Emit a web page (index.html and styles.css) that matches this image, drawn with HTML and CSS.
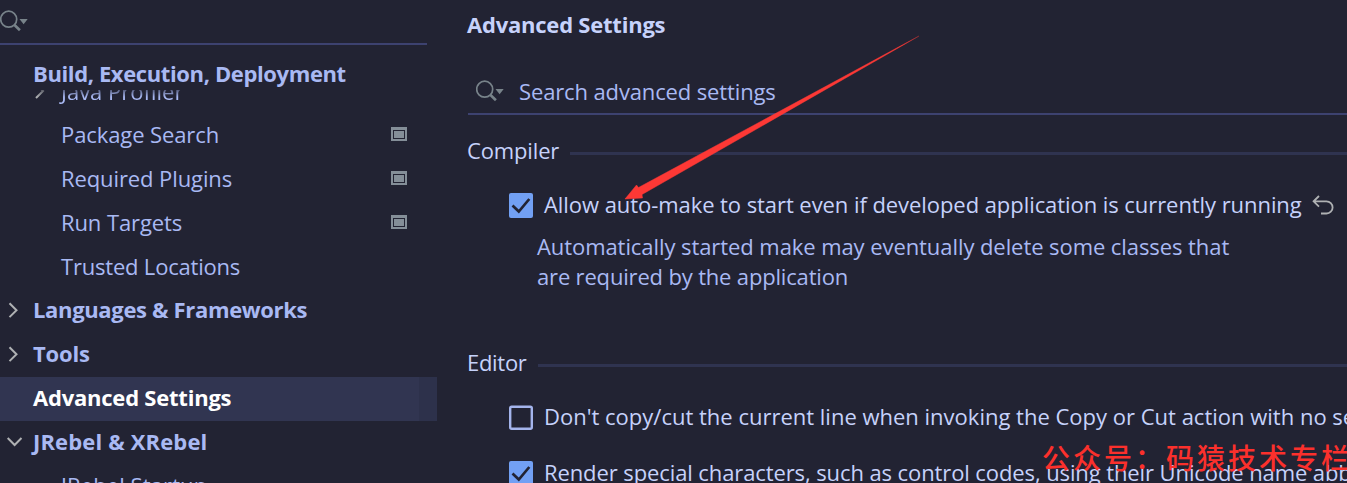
FILE: index.html
```html
<!DOCTYPE html>
<html lang="en">
<head>
<meta charset="utf-8">
<title>Settings</title>
<link rel="stylesheet" href="styles.css">
</head>
<body>
<div class="window">
  <aside class="sidebar">
    <div class="side-search">
      <svg class="search-icon" width="28" height="22" viewBox="0 0 28 22"><circle cx="8.7" cy="9.2" r="8" fill="none" stroke="#78838a" stroke-width="1.7"/><path d="M14.5 15l5.4 5.2" stroke="#78838a" stroke-width="2.6"/><path d="M19.5 9h8.2l-4.1 5.2z" fill="#78838a"/></svg>
    </div>
    <div class="tree-head"><span class="t-build">Build, Execution, Deployment</span></div>
    <div class="tree">
      <div class="row child faded"><svg class="arrow-sub" width="10" height="16" viewBox="0 0 10 16"><path d="M1 1l7 7-7 7" fill="none" stroke="#afb1b3" stroke-width="2"/></svg><span class="t-java">Java Profiler</span></div>
      <div class="row child"><span class="t-package">Package Search</span><i class="project-icon"></i></div>
      <div class="row child"><span class="t-plugins">Required Plugins</span><i class="project-icon"></i></div>
      <div class="row child"><span class="t-targets">Run Targets</span><i class="project-icon"></i></div>
      <div class="row child"><span class="t-trusted">Trusted Locations</span></div>
      <div class="row top"><svg class="arrow" width="17" height="16" viewBox="0 0 17 16"><path d="M1.5 1.3l7 6.9-7 6.9" fill="none" stroke="#afb1b3" stroke-width="2"/></svg><span class="t-lang">Languages &amp; Frameworks</span></div>
      <div class="row top"><svg class="arrow" width="17" height="16" viewBox="0 0 17 16"><path d="M1.5 1.3l7 6.9-7 6.9" fill="none" stroke="#afb1b3" stroke-width="2"/></svg><span class="t-tools">Tools</span></div>
      <div class="row top selected"><span class="t-adv">Advanced Settings</span></div>
      <div class="row top"><svg class="arrow" width="17" height="16" viewBox="0 0 17 16"><path d="M-.3 4l6.9 7 6.9-7" fill="none" stroke="#afb1b3" stroke-width="2" /></svg><span class="t-jrebel">JRebel &amp; XRebel</span></div>
      <div class="row child"><span class="t-startup">JRebel Startup</span></div>
    </div>
  </aside>
  <main class="main">
    <h1 class="title"><span class="t-title">Advanced Settings</span></h1>
    <div class="main-search">
      <svg class="search-icon" width="28" height="22" viewBox="0 0 28 22"><circle cx="8.7" cy="9.2" r="8" fill="none" stroke="#78838a" stroke-width="1.7"/><path d="M14.5 15l5.4 5.2" stroke="#78838a" stroke-width="2.6"/><path d="M19.5 9h8.2l-4.1 5.2z" fill="#78838a"/></svg>
      <span class="t-search">Search advanced settings</span>
    </div>
    <section class="group compiler">
      <h2 class="group-title"><span class="t-compiler">Compiler</span></h2>
      <div class="option first">
        <svg class="check" width="24" height="25" viewBox="0 0 24 25"><rect width="24" height="25" rx="2" fill="#72a0f4"/><path d="M3.5 12.5l6.300 6L20.3 6" fill="none" stroke="#222333" stroke-width="2.7"/></svg>
        <span class="t-allow">Allow auto-make to start even if developed application is currently running</span>
        <svg class="undo" width="22" height="20" viewBox="0 0 22 20"><path d="M7 1L1.6 6.3 7 11.6M2 6.3h12.5a6.1 6.1 0 0 1 0 12.2H9" fill="none" stroke="#afb1b3" stroke-width="1.8"/></svg>
      </div>
      <p class="hint"><span class="t-hint1">Automatically started make may eventually delete some classes that</span><br><span class="t-hint2">are required by the application</span></p>
    </section>
    <section class="group">
      <h2 class="group-title"><span class="t-editor">Editor</span></h2>
      <div class="option second">
        <svg class="check" width="24" height="25" viewBox="0 0 24 25"><rect x="1.2" y="1.7" width="21.6" height="22" rx="1.5" fill="none" stroke="#a4b4ec" stroke-width="2.4"/></svg>
        <span class="t-copy">Don't copy/cut the current line when invoking the Copy or Cut action with no selection</span>
      </div>
      <div class="option third">
        <svg class="check" width="24" height="25" viewBox="0 0 24 25"><rect width="24" height="25" rx="2" fill="#72a0f4"/><path d="M3.5 12.5l6.300 6L20.3 6" fill="none" stroke="#222333" stroke-width="2.7"/></svg>
        <span class="t-render">Render special characters, such as control codes, using their Unicode name abbreviations</span>
      </div>
    </section>
  </main>
  <svg class="pointer" width="300" height="168" viewBox="0 0 300 168"><defs><linearGradient id="fade" x1="1" y1="0" x2="0" y2="1"><stop offset="0" stop-color="#fd3835" stop-opacity=".5"/><stop offset=".06" stop-color="#fd3835"/></linearGradient></defs><path d="M299 4L18.500 155.500 16.500 153 5 167 22.500 166 22 162.500 134 98.500z" fill="url(#fade)" stroke="url(#fade)" stroke-width=".5"/></svg>
  <div class="watermark">公众号：码猿技术专栏</div>
</div>
</body>
</html>
```

FILE: styles.css
```css
* { box-sizing: border-box; }
body { margin: 0; background: #222333; }
.window {
  position: relative;
  display: flex;
  width: 1347px;
  height: 483px;
  overflow: hidden;
  background: #222333;
  color: #a9b9f3;
  font: 22px/44px "Open Sans", "Noto Sans", sans-serif;
  white-space: nowrap;
}
.sidebar { width: 437px; flex: none; }
.side-search {
  width: 427px;
  height: 45px;
  padding-top: 10px;
  border-bottom: 2px solid #3d4270;
}
.search-icon { display: block; flex: none; }
.tree-head { height: 45px; padding: 6px 0 0 33px; font-weight: 700; }
.tree { height: 393px; overflow: hidden; }
.row { display: flex; align-items: center; height: 44px; }
.row span { padding-bottom: 2px; }
.row:first-child { margin-top: -21px; }
.child { padding-left: 61px; }
.top { font-weight: 700; padding-left: 8px; }
.top span { padding-bottom: 4px; }
.arrow { width: 17px; margin: -2px 8px 0 0; overflow: visible; }
.arrow-sub { margin: 0 16px 0 -26px; }
.faded {
  -webkit-mask-image: linear-gradient(transparent 16px, #000 28px);
  mask-image: linear-gradient(transparent 16px, #000 28px);
}
.faded span { padding-bottom: 0; }
.selected {
  padding-left: 33px;
  color: #fff;
  background: linear-gradient(90deg, #313551 419px, #2d314b 419px);
}
.project-icon {
  width: 16px;
  height: 14px;
  margin: -2px 30px 0 auto;
  border: 2px solid #848e98;
  border-top-width: 3px;
  background: #848e98;
  background-clip: content-box;
  padding: 1px;
}
.main { flex: 1; min-width: 0; padding-left: 30px; }
.title { height: 50px; margin: 0; padding-top: 2px; font-size: 22px; font-weight: 700; line-height: 44px; color: #c6d2fb; }
.main-search {
  display: flex;
  align-items: center;
  height: 65px;
  margin-left: 1px;
  padding: 18px 0 0 8px;
  border-bottom: 2px solid #3d4270;
}
.main-search .search-icon { margin: 0 15px 0 0; }
.group { color: #c6d2fb; }
.compiler { height: 212px; }
.group-title { display: flex; align-items: center; height: 72px; margin: 0; font-size: 22px; font-weight: 400; }
.group-title span { padding-bottom: 2px; }
.group-title::after { content: ""; flex: 1; height: 3px; margin: 4px 0 0 11px; background: #2f3350; }
.option { display: flex; align-items: center; height: 44px; padding-left: 42px; }
.option span { padding-bottom: 2px; }
.first { margin-top: -4px; }
.second { margin-top: -4px; }
.third { margin-top: 12px; }
.check { flex: none; margin: 1px 11px 0 0; }
.undo { flex: none; margin-left: 10px; }
.hint { margin: 4px 0 0 70px; line-height: 30px; color: #a9b9f3; }
.t-build { letter-spacing: -.38px; }
.t-lang { letter-spacing: -.34px; }
.t-tools { letter-spacing: -.15px; }
.t-adv, .t-title { letter-spacing: -.22px; }
.t-jrebel { letter-spacing: .15px; }
.t-package, .t-plugins, .t-targets { letter-spacing: -.1px; }
.t-trusted { letter-spacing: -.2px; }
.row .t-startup { letter-spacing: .1px; padding-bottom: 5px; }
.t-search { letter-spacing: -.13px; }
.t-compiler { letter-spacing: -.15px; }
.t-editor { letter-spacing: -.3px; }
.t-allow { letter-spacing: -.065px; }
.t-hint1 { letter-spacing: -.075px; }
.t-hint2 { letter-spacing: -.17px; }
.t-render { letter-spacing: -.1px; }
.pointer { position: absolute; left: 620px; top: 32px; }
.watermark {
  position: absolute;
  left: 1042px;
  top: 435px;
  color: #fb302c;
  font: 500 28px/44px "Noto Sans CJK SC", sans-serif;
  letter-spacing: 3px;
}
```
